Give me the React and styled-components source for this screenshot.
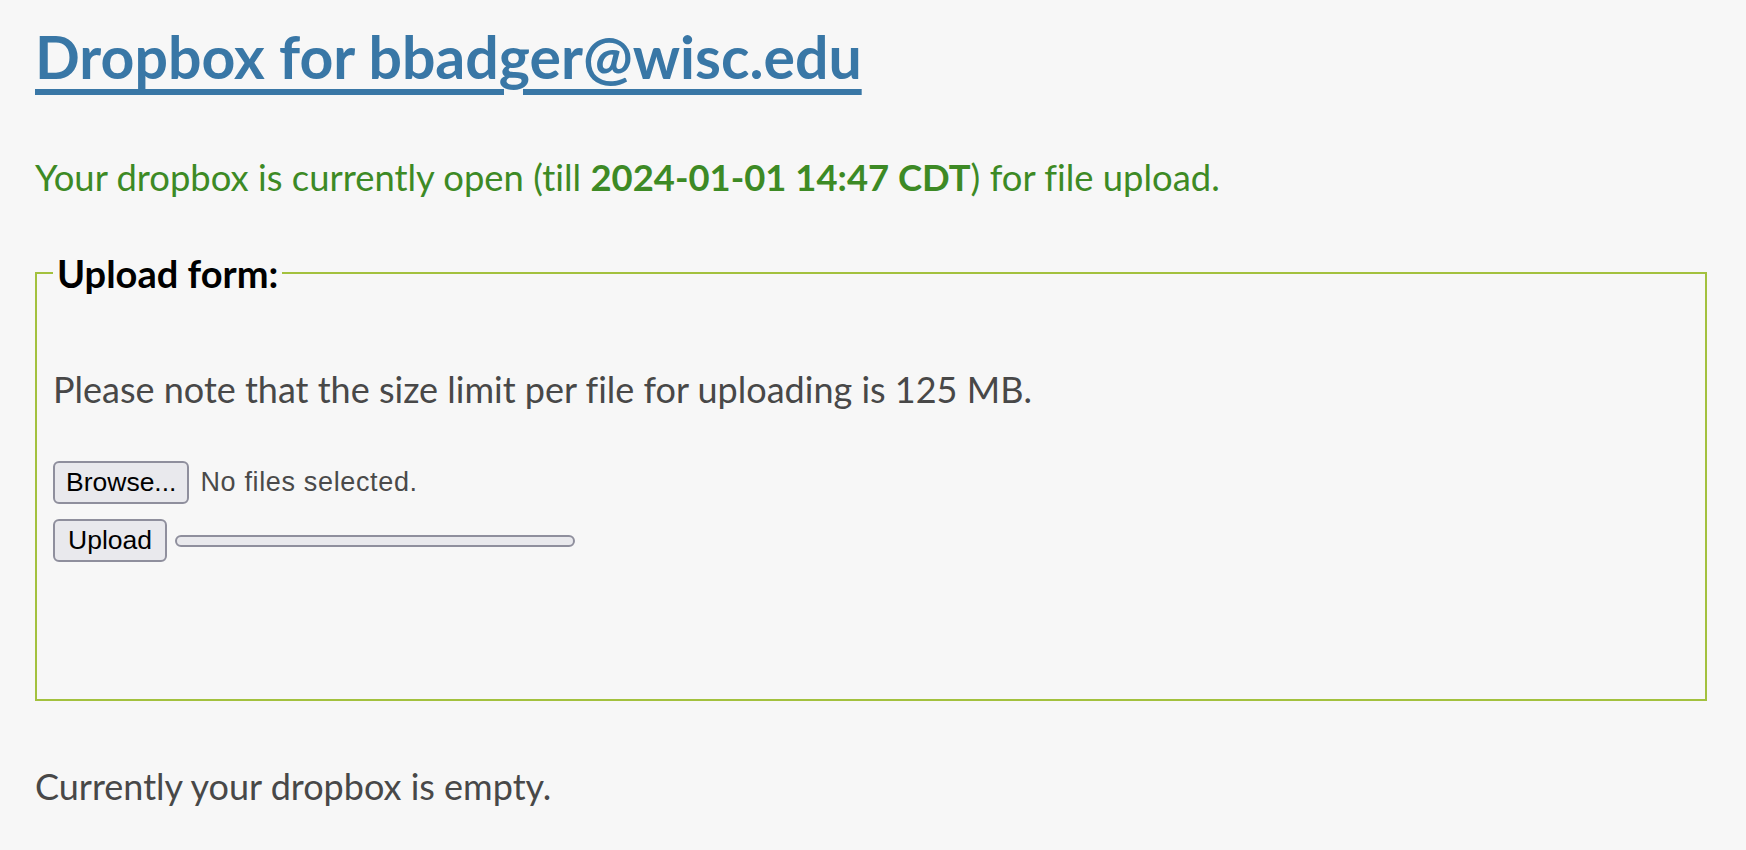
import React from "react";
import styled, { createGlobalStyle } from "styled-components";

const Global = createGlobalStyle`
  html, body { margin: 0; padding: 0; background: #f7f7f7; }
  body {
    font-family: Lato, "Open Sans", sans-serif;
    color: #484848;
    font-variant-ligatures: no-common-ligatures;
    font-feature-settings: "liga" 0, "clig" 0;
  }
`;

const Page = styled.main`
  padding: 21px 39px 40px 35px;
`;

const Title = styled.h1`
  margin: 0;
  font-family: Lato, sans-serif;
  font-weight: 700;
  font-size: 59px;
  line-height: 72px;
  color: #3977a6;
  a {
    color: inherit;
    text-decoration: underline;
    text-decoration-thickness: 6px;
    text-underline-offset: 10px;
    text-decoration-skip-ink: auto;
  }
`;

const Status = styled.p`
  margin: 60px 0 0;
  font-size: 36.4px;
  line-height: 48px;
  color: #3d8a25;
  strong { font-weight: 700; }
`;

const Fieldset = styled.fieldset`
  margin: 48px 0 0;
  padding: 0 16px 137px 16px;
  border: 2px solid #a3c13e;
  min-width: 0;
`;

const Legend = styled.legend`
  padding: 0 4px;
  font-size: 38px;
  font-weight: 700;
  color: #000;
  line-height: 48px;
`;

const Text = styled.p`
  margin: ${p => p.$top}px 0 0;
  font-size: 36px;
  line-height: 48px;
  color: #484848;
`;

const Row = styled.div`
  display: flex;
  align-items: center;
  gap: ${p => p.$gap}px;
  margin-top: ${p => p.$top}px;
`;

const Button = styled.button`
  font-family: "Liberation Sans", Arial, sans-serif;
  font-size: 26.5px;
  height: 43px;
  padding: 0 ${p => p.$px}px;
  background: #e9e9ed;
  color: #000;
  border: 2px solid #8f8f9d;
  border-radius: 6px;
`;

const FileLabel = styled.span`
  font-family: "Liberation Sans", Arial, sans-serif;
  font-size: 27px;
  letter-spacing: 0.65px;
  color: #4a4a4a;
`;

const Progress = styled.div`
  width: 400px;
  height: 12px;
  box-sizing: border-box;
  background: #e9e9ed;
  border: 2px solid #8f8f9d;
  border-radius: 7px;
`;

export default function App() {
  return (
    <>
      <Global />
      <Page>
        <Title>
          <a href="#">Dropbox for bbadger@wisc.edu</a>
        </Title>
        <Status>
          Your dropbox is currently open (till <strong>2024-01-01 14:47 CDT</strong>) for file upload.
        </Status>
        <Fieldset>
          <Legend>Upload form:</Legend>
          <Text $top={68}>Please note that the size limit per file for uploading is 125 MB.</Text>
          <Row $top={48} $gap={11}>
            <Button type="button" $px={11}>Browse...</Button>
            <FileLabel>No files selected.</FileLabel>
          </Row>
          <Row $top={15} $gap={8}>
            <Button type="button" $px={13}>Upload</Button>
            <Progress />
          </Row>
        </Fieldset>
        <Text $top={61}>Currently your dropbox is empty.</Text>
      </Page>
    </>
  );
}
